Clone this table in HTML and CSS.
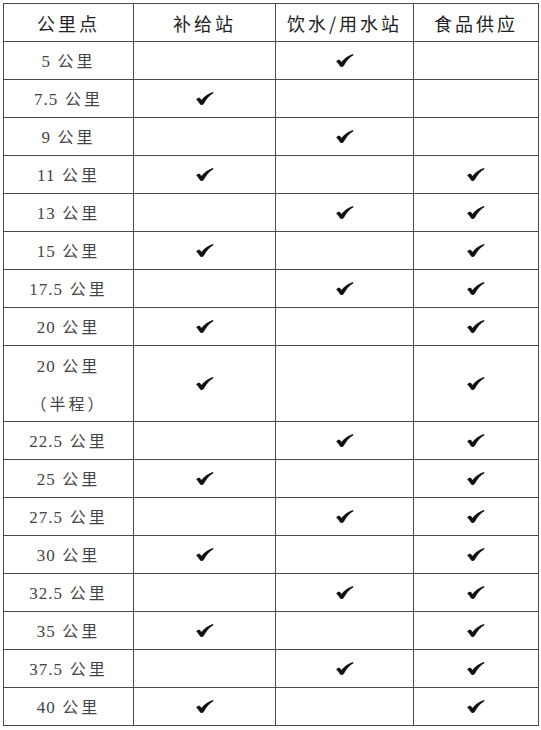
FILE: index.html
```html
<!DOCTYPE html>
<html lang="zh">
<head>
<meta charset="utf-8">
<link rel="stylesheet" href="styles.css">
</head>
<body>
<svg class="defs" width="0" height="0" aria-hidden="true">
  <defs>
    <symbol id="chk" viewBox="0 0 18 13">
      <path d="M0.2 7.4 C1.2 6.2 2.4 5.6 3.3 5.8 C4.1 6.1 4.8 7 5.4 7.9 C8.2 4.6 12 1.6 16.8 0 L17.6 1 C13.6 3.4 10.2 7.3 8 11.5 C7.5 12.4 6.8 12.9 5.8 12.9 C4.6 12.9 4 12.3 3.5 11.4 C2.5 9.8 1.5 8.5 0.2 7.4 Z"/>
    </symbol>
  </defs>
</svg>
<table class="grid">
  <colgroup>
    <col class="c1"><col class="c2"><col class="c3"><col class="c4">
  </colgroup>
  <thead>
    <tr><th>公里点</th><th>补给站</th><th>饮水/用水站</th><th>食品供应</th></tr>
  </thead>
  <tbody>
    <tr><td><span class="n">5</span> 公里</td><td></td><td><svg class="ck"><use href="#chk"/></svg></td><td></td></tr>
    <tr><td><span class="n">7.5</span> 公里</td><td><svg class="ck"><use href="#chk"/></svg></td><td></td><td></td></tr>
    <tr><td><span class="n">9</span> 公里</td><td></td><td><svg class="ck"><use href="#chk"/></svg></td><td></td></tr>
    <tr><td><span class="n">11</span> 公里</td><td><svg class="ck"><use href="#chk"/></svg></td><td></td><td><svg class="ck"><use href="#chk"/></svg></td></tr>
    <tr><td><span class="n">13</span> 公里</td><td></td><td><svg class="ck"><use href="#chk"/></svg></td><td><svg class="ck"><use href="#chk"/></svg></td></tr>
    <tr><td><span class="n">15</span> 公里</td><td><svg class="ck"><use href="#chk"/></svg></td><td></td><td><svg class="ck"><use href="#chk"/></svg></td></tr>
    <tr><td><span class="n">17.5</span> 公里</td><td></td><td><svg class="ck"><use href="#chk"/></svg></td><td><svg class="ck"><use href="#chk"/></svg></td></tr>
    <tr><td><span class="n">20</span> 公里</td><td><svg class="ck"><use href="#chk"/></svg></td><td></td><td><svg class="ck"><use href="#chk"/></svg></td></tr>
    <tr class="tall"><td><span class="n">20</span> 公里<br>（半程）</td><td><svg class="ck"><use href="#chk"/></svg></td><td></td><td><svg class="ck"><use href="#chk"/></svg></td></tr>
    <tr><td><span class="n">22.5</span> 公里</td><td></td><td><svg class="ck"><use href="#chk"/></svg></td><td><svg class="ck"><use href="#chk"/></svg></td></tr>
    <tr><td><span class="n">25</span> 公里</td><td><svg class="ck"><use href="#chk"/></svg></td><td></td><td><svg class="ck"><use href="#chk"/></svg></td></tr>
    <tr><td><span class="n">27.5</span> 公里</td><td></td><td><svg class="ck"><use href="#chk"/></svg></td><td><svg class="ck"><use href="#chk"/></svg></td></tr>
    <tr><td><span class="n">30</span> 公里</td><td><svg class="ck"><use href="#chk"/></svg></td><td></td><td><svg class="ck"><use href="#chk"/></svg></td></tr>
    <tr><td><span class="n">32.5</span> 公里</td><td></td><td><svg class="ck"><use href="#chk"/></svg></td><td><svg class="ck"><use href="#chk"/></svg></td></tr>
    <tr><td><span class="n">35</span> 公里</td><td><svg class="ck"><use href="#chk"/></svg></td><td></td><td><svg class="ck"><use href="#chk"/></svg></td></tr>
    <tr><td><span class="n">37.5</span> 公里</td><td></td><td><svg class="ck"><use href="#chk"/></svg></td><td><svg class="ck"><use href="#chk"/></svg></td></tr>
    <tr><td><span class="n">40</span> 公里</td><td><svg class="ck"><use href="#chk"/></svg></td><td></td><td><svg class="ck"><use href="#chk"/></svg></td></tr>
  </tbody>
</table>
</body>
</html>
```

FILE: styles.css
```css
html, body {
  margin: 0;
  padding: 0;
  background: #ffffff;
}
body {
  padding: 3px 0 0 3px;
  font-family: "Noto Sans CJK SC", "Noto Sans", sans-serif;
}
.defs {
  position: absolute;
  width: 0;
  height: 0;
}
.grid {
  border-collapse: collapse;
  table-layout: fixed;
  width: 535px;
}
.c1 { width: 130px; }
.c2 { width: 142px; }
.c3 { width: 138px; }
.c4 { width: 125px; }
.grid tr {
  height: 38px;
}
.grid tr.tall {
  height: 76px;
}
.grid th,
.grid td {
  border: 1px solid #4a4a4a;
  padding: 0;
  text-align: center;
  vertical-align: middle;
}
.grid th {
  font-weight: 400;
  font-size: 18px;
  line-height: 20px;
  letter-spacing: 3px;
  color: #222;
}
.grid td {
  font-size: 16px;
  line-height: 20px;
  letter-spacing: 3px;
  color: #444;
}
.grid tr.tall td {
  line-height: 36px;
}
.n {
  font-family: "Liberation Serif", serif;
  font-size: 17px;
  letter-spacing: 1px;
}
.ck {
  width: 18px;
  height: 13px;
  fill: #111;
  display: block;
  margin: 0 auto;
}
```
